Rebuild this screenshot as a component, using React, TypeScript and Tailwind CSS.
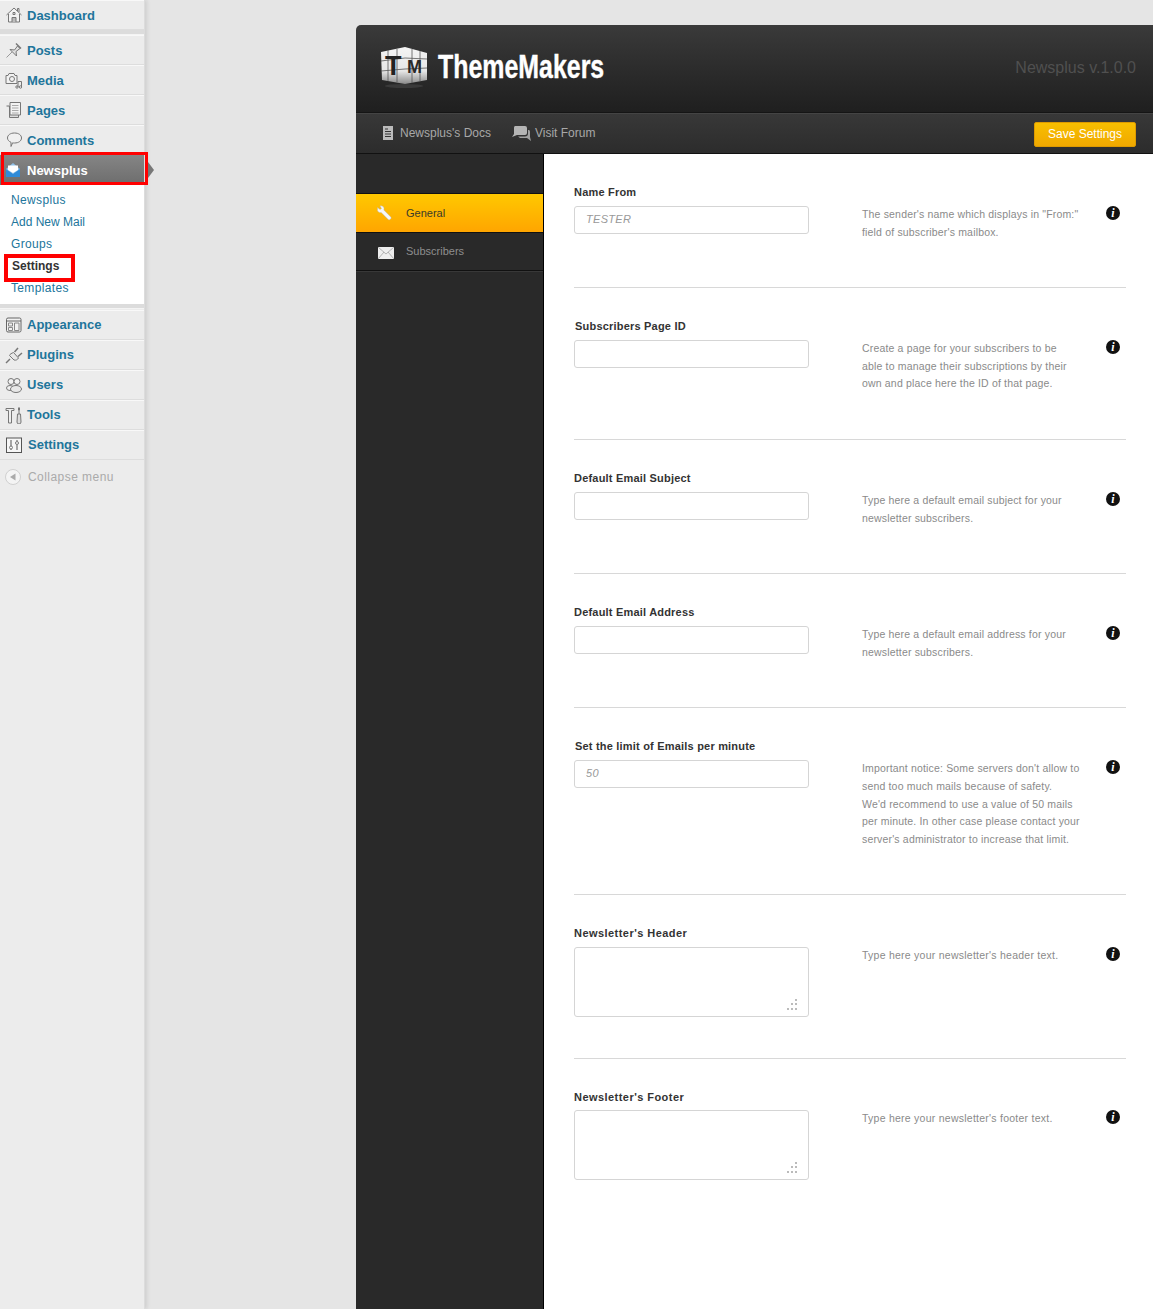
import React from 'react';

const Icon: React.FC<{ children: React.ReactNode; className?: string }> = ({ children, className }) => (
    <svg viewBox="0 0 18 18" fill="none" stroke="#777" strokeWidth="1" className={`w-[18px] h-[18px] shrink-0 ${className || ''}`}>{children}</svg>
);

const icons: Record<string, React.ReactNode> = {
    Dashboard: <><path d="M1.5 9 9 2l7.5 7M3.5 8v8h11V8" fill="#f4f4f4" /><path d="M12.5 5V2.5h1.5V6" /><path d="M7 16v-4.5h4V16" fill="#bbb" /><path d="M8 6.5h2v2H8z" /></>,
    Posts: <><path d="M1.5 16.5 7 11" stroke="#999" /><path d="M5 8.5 9.5 9l3-4 2.500 2.500-4 3 .5 4.500z" fill="#e2e2e2" /><path d="m11 2.500 5 5" strokeWidth="1.500" /></>,
    Media: <><path d="M1 4.500h2l1-2h5l1 2h2v8H1z" fill="#f2f2f2" /><circle cx="7" cy="8" r="2.500" /><path d="M13 10.500h3.500V16M13 10.500V16" /><circle cx="12" cy="16" r="1.200" /><circle cx="15.500" cy="16" r="1.200" /></>,
    Pages: <><path d="M1.500 5h3v11.500h9V14" fill="#ddd" /><path d="M5 1.500h10.500V14H5z" fill="#f3f3f3" /><path d="M7 4.500h6.500M7 7h6.500M7 9.500h6.500M7 12h6.500" stroke="#aaa" /></>,
    Comments: <><path d="M9.500 2c4.200 0 7 2.100 7 5s-2.800 5-7 5c-.7 0-1.300 0-1.900-.2L6 15.500v-4.200C3.900 10.400 2.500 8.900 2.500 7c0-2.900 2.800-5 7-5z" fill="#f0f0f0" /></>,
    Appearance: <><rect x="1.500" y="2" width="14.500" height="14" rx="1.500" fill="#f1f1f1" stroke="#666" /><path d="M1.500 5h14.500" stroke="#666" /><path d="M3.500 7h4v3h-4zM3.500 11.500h4v3h-4zM9.500 7h4.500v7.500H9.500z" stroke="#888" /></>,
    Plugins: <><path d="M1 17l4-4" strokeWidth="1.500" /><path d="M4.500 9.500 9 14c2 .6 3.500-.3 4.500-2l-5-5.500c-2 .8-3.500 1.500-4 3z" fill="#e8e8e8" /><path d="m9.500 6 3.500-4M13 10.500l4-3.500" strokeWidth="1.500" /></>,
    Users: <><circle cx="6" cy="5.500" r="3" fill="#f2f2f2" /><circle cx="12" cy="5.500" r="3" fill="#f2f2f2" /><ellipse cx="5" cy="12" rx="3.500" ry="2.500" fill="#f2f2f2" /><ellipse cx="11" cy="13" rx="5.500" ry="3.500" fill="#e8e8e8" /></>,
    Tools: <><path d="M1 2.500h8v2H6.500V17h-3V4.500L1 4.500z" fill="#eee" /><path d="M14 1.500v3" strokeWidth="2" /><path d="M12.500 8h3l.5 8a2 2 0 0 1-4 0z" fill="#ddd" /><path d="M14 4.500V8" /></>,
    Settings: <><rect x="1.500" y="2" width="15" height="14.500" fill="#f6f6f6" stroke="#555" /><path d="M6 4v6M12 4v1M12 9v5M6 13v1" stroke="#555" /><circle cx="6" cy="11.500" r="1.500" /><circle cx="12" cy="7" r="1.500" /></>,
};

const MenuItem: React.FC<{ label: string; textClass?: string }> = ({ label, textClass }) => (
    <div className="h-[30px] flex items-center pl-[5px] border-t border-t-[#f8f8f8] border-b border-b-[#dddddd] text-[13px] font-bold text-[#21759b]">
        <Icon>{icons[label]}</Icon>
        <span className={textClass || 'ml-[4px]'}>{label}</span>
    </div>
);

const Sep = () => <div className="h-[5px] bg-[#dcdcdc] border-b border-b-[#f4f4f4]" />;

const Sidebar = () => (
    <aside className="relative w-[145px] shrink-0 bg-[#ececec] border-r border-r-[#dcdcdc] shadow-[2px_0_4px_rgba(0,0,0,0.1)]">
        <MenuItem label="Dashboard" textClass="ml-[4px] mt-[2px]" />
        <Sep />
        {['Posts', 'Media', 'Pages', 'Comments'].map(l => <MenuItem key={l} label={l} textClass="ml-[4px] mt-[2px]" />)}
        <div className="relative h-[30px] flex items-center pl-[5px] bg-gradient-to-b from-[#858585] to-[#6d6d6d] text-[13px] font-bold text-white">
            <svg viewBox="0 0 16 16" className="w-[16px] h-[16px] shrink-0">
                <path d="M1 7 8 1l7 6v8H1z" fill="#8fc0e8" />
                <path d="M3 8V3.500h10V8L8 11z" fill="#fff" />
                <path d="M1 7l7 5 7-5v8H1z" fill="#2f8bd8" />
            </svg>
            <span className="ml-[6px] mt-[2px]">Newsplus</span>
            <span className="absolute left-[148px] top-[7px] w-0 h-0 border-y-[8px] border-y-transparent border-l-[6px] border-l-[#777]" />
            <span className="absolute left-[1px] -top-[3px] w-[147px] h-[33px] border-[3px] border-[#ff0000]" />
        </div>
        <div className="bg-white h-[119px] pt-[4px] text-[12px] leading-[22px] tracking-[0.35px] text-[#21759b]">
            <div className="pl-[11px]">Newsplus</div>
            <div className="pl-[11px] tracking-normal">Add New Mail</div>
            <div className="pl-[11px]">Groups</div>
            <div className="relative pl-[12px] font-bold text-[#333] tracking-normal">
                Settings
                <span className="absolute left-[4px] -top-[1px] w-[71px] h-[28px] border-[4px] border-[#ff0000]" />
            </div>
            <div className="pl-[11px]">Templates</div>
        </div>
        <Sep />
        <div className="h-px" />
        <MenuItem label="Appearance" />
        <MenuItem label="Plugins" />
        <MenuItem label="Users" />
        <MenuItem label="Tools" />
        <MenuItem label="Settings" textClass="ml-[5px]" />
        <div className="h-[34px] flex items-center pl-[5px] text-[12px] tracking-[0.45px] text-[#aaaaaa]">
            <svg viewBox="0 0 16 16" className="w-[16px] h-[16px] shrink-0">
                <circle cx="8" cy="8" r="7.500" fill="#f4f4f4" stroke="#d0d0d0" />
                <path d="M10.500 4.500v7L5 8z" fill="#aaa" />
            </svg>
            <span className="ml-[7px]">Collapse menu</span>
        </div>
    </aside>
);

const Logo = () => (
    <svg viewBox="0 0 48 42" className="w-[48px] h-[42px] shrink-0 -mt-[2px]">
        <defs>
            <linearGradient id="cubeLeft" x1="0" y1="0" x2="0" y2="1">
                <stop offset="0" stopColor="#f4f4f4" />
                <stop offset="0.65" stopColor="#e6e6e6" />
                <stop offset="1" stopColor="#8a8a8a" />
            </linearGradient>
        </defs>
        <ellipse cx="24" cy="39" rx="19" ry="2" fill="#3a3a3a" />
        <path d="M1 5 25 0v37L2 33z" fill="url(#cubeLeft)" />
        <path d="M25 0l22 6v27l-22 4z" fill="url(#cubeLeft)" />
        <path d="M1 14l24-3M1 24l24-2M8 3v31M17 2v33M25 11l22 1M25 22l22-1M32 2v34M40 4v30" stroke="#555" strokeWidth="0.800" />
        <text x="5" y="28" fontFamily="'Liberation Sans', sans-serif" fontWeight="700" fontSize="27" fill="#222">T</text>
        <text x="27" y="26" fontFamily="'Liberation Sans', sans-serif" fontWeight="700" fontSize="18" fill="#2a2a2a">M</text>
    </svg>
);

const Header = () => (
    <header className="h-[88px] shrink-0 rounded-tl-[5px] flex items-center justify-between pl-[24px] pr-[17px] bg-gradient-to-b from-[#3a3a3a] to-[#1f1f1f] border-b border-b-[#151515]">
        <div className="flex items-center">
            <Logo />
            <span className="ml-[10px] -mt-[3px] origin-left scale-x-[0.755] text-[33px] font-bold text-white [-webkit-text-stroke:0.4px_white]">ThemeMakers</span>
        </div>
        <span className="text-[16px] text-[#505050] -mt-[2px]">Newsplus v.1.0.0</span>
    </header>
);

const Toolbar = () => (
    <div className="h-[41px] shrink-0 flex items-center pl-[27px] pr-[17px] bg-gradient-to-b from-[#383838] to-[#2c2c2c] border-t border-t-[#444] border-b border-b-[#111] text-[12px] text-[#a8a8a8]">
        <svg viewBox="0 0 10 14" className="w-[10px] h-[14px] shrink-0 -mt-px">
            <path d="M0 0h10v14H0z" fill="#bbb" />
            <path d="M2 3h3M2 5.500h6M2 8h6M2 10.500h6" stroke="#333" />
        </svg>
        <span className="ml-[7px] -mt-[2px]">Newsplus's Docs</span>
        <svg viewBox="0 0 19 15" className="ml-[21px] w-[19px] h-[15px] shrink-0 -mt-px">
            <path d="M3 0h10a2 2 0 0 1 2 2v5a2 2 0 0 1-2 2H5l-5 2 2-3V2a2 2 0 0 1 1-2z" fill="#b4b4b4" />
            <path d="M16 4h1a2 2 0 0 1 1 2v5l1 4-4-3H8L6 10.500h7a3 3 0 0 0 3-3z" fill="#a0a0a0" />
        </svg>
        <span className="ml-[4px] -mt-[2px]">Visit Forum</span>
        <button className="ml-auto mt-[1px] w-[102px] h-[25px] rounded-[2px] border border-[#dd9a00] bg-gradient-to-b from-[#f8bf00] to-[#f0a800] text-[12px] text-white">Save Settings</button>
    </div>
);

const Tabs = () => (
    <nav className="w-[188px] shrink-0 bg-[#292929] border-r border-r-black pt-[39px] text-[11px]">
        <div className="h-[40px] flex items-center pl-[20px] border-y border-y-[#111] bg-gradient-to-b from-[#ffc800] to-[#ffa500] text-[#3a3a2a]">
            <svg viewBox="0 0 16 16" className="w-[16px] h-[16px] shrink-0">
                <path d="M1.500 2.500 4 4.500l1.500-1L4 1c2-.6 3.800.4 4 2.500 0 .6 0 1-.2 1.500l7 7c.5.6.5 1.300 0 1.800l-.8.7c-.5.5-1.300.5-1.800 0l-7-7c-2.200.6-4.300-1-3.700-3.500z" fill="#f6f6f6" stroke="#b0b0b0" strokeWidth="0.400" />
            </svg>
            <span className="ml-[14px]">General</span>
        </div>
        <div className="h-[38px] flex items-center pl-[22px] border-b border-b-[#111] text-[#8e8e8e]">
            <svg viewBox="0 0 16 12" className="w-[16px] h-[12px] shrink-0 mt-[3px]">
                <path d="M0 0h16v12H0z" fill="#eee" />
                <path d="M0 0l8 7 8-7M0 12l6-7M16 12l-6-7" fill="none" stroke="#999" strokeWidth="0.700" />
            </svg>
            <span className="ml-[12px]">Subscribers</span>
        </div>
        <div className="h-px bg-[#383838]" />
    </nav>
);

const InfoBadge = () => (
    <span className="absolute left-[532px] top-0 w-[14px] h-[14px] rounded-full bg-[#111] flex items-center justify-center text-white text-[12px] font-bold italic leading-none font-['Liberation_Serif',serif]">i</span>
);

interface FieldProps {
    label: string;
    labelClass?: string;
    placeholder?: string;
    area?: boolean;
    desc: string[];
}

const fields: FieldProps[] = [
    { label: 'Name From', placeholder: 'TESTER', desc: ['The sender\'s name which displays in "From:"', "field of subscriber's mailbox."] },
    { label: 'Subscribers Page ID', labelClass: 'pl-px', desc: ['Create a page for your subscribers to be', 'able to manage their subscriptions by their', 'own and place here the ID of that page.'] },
    { label: 'Default Email Subject', desc: ['Type here a default email subject for your', 'newsletter subscribers.'] },
    { label: 'Default Email Address', desc: ['Type here a default email address for your', 'newsletter subscribers.'] },
    { label: 'Set the limit of Emails per minute', labelClass: 'pl-px', placeholder: '50', desc: ["Important notice: Some servers don't allow to", 'send too much mails because of safety.', "We'd recommend to use a value of 50 mails", 'per minute. In other case please contact your', "server's administrator to increase that limit."] },
    { label: "Newsletter's Header", area: true, desc: ["Type here your newsletter's header text."] },
    { label: "Newsletter's Footer", area: true, desc: ["Type here your newsletter's footer text."] },
];

const Field: React.FC<FieldProps & { last: boolean }> = ({ label, labelClass, placeholder, area, desc, last }) => (
    <section className={`pt-[31px] ${last ? '' : 'border-b border-b-[#d8d8d8]'}`}>
        <div className={`h-[14px] text-[11px] leading-[14px] font-bold text-[#333] ${area ? 'tracking-[0.45px]' : 'tracking-[0.2px]'} ${labelClass || ''}`}>{label}</div>
        <div className={`relative flex items-start ${last ? 'mt-[6px]' : 'mt-[7px]'}`}>
            {area ? (
                <div className={`relative w-[235px] h-[70px] ${last ? '' : 'mb-[41px]'}`}>
                    <textarea className="block w-full h-full resize-none rounded-[3px] border border-[#d5d5d5] bg-white" />
                    <svg viewBox="0 0 12 12" className="absolute right-[11px] bottom-[6px] w-[12px] h-[12px]" fill="#bbb">
                        <path d="M9 0h2v2H9zM5 4h2v2H5zM9 4h2v2H9zM1 9h2v2H1zM5 9h2v2H5zM9 9h2v2H9z" />
                    </svg>
                </div>
            ) : (
                <input
                    readOnly
                    placeholder={placeholder}
                    className="block w-[235px] h-[28px] mb-[53px] px-[11px] pb-[2px] rounded-[3px] border border-[#d5d5d5] bg-white text-[11px] tracking-[0.3px] italic placeholder:text-[#999]"
                />
            )}
            <div className={`ml-[53px] mb-[46px] text-[10.500px] leading-[17.600px] text-[#8a8a8a] whitespace-nowrap ${area ? 'tracking-[0.25px]' : 'tracking-[0.17px]'}`}>
                {desc.map(line => <div key={line}>{line}</div>)}
            </div>
            <InfoBadge />
        </div>
    </section>
);

export default function App() {
    return (
        <div className="flex h-[1309px] w-[1153px] overflow-hidden bg-[#e5e5e5] font-['Liberation_Sans',Arial,sans-serif]">
            <Sidebar />
            <main className="flex-1 pl-[211px] pt-[25px]">
                <div className="h-full flex flex-col">
                    <Header />
                    <Toolbar />
                    <div className="flex flex-1 min-h-0">
                        <Tabs />
                        <div className="flex-1 bg-white pl-[30px] pr-[27px]">
                            {fields.map((f, i) => <Field key={f.label} {...f} last={i === fields.length - 1} />)}
                        </div>
                    </div>
                </div>
            </main>
        </div>
    );
}
